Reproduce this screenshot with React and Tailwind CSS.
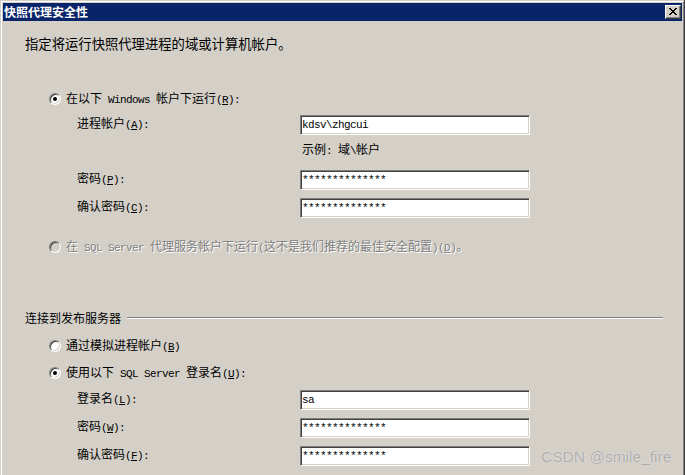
import React from "react";

const CJK = "font-['Noto_Sans_CJK_SC','Noto_Sans_CJK_JP',sans-serif]";

function M({ children }) {
  return (
    <span className="font-['Liberation_Mono',monospace] text-[11px] tracking-[-0.6px]">
      {children}
    </span>
  );
}

function Mn({ k }) {
  return (
    <M>
      (<u>{k}</u>)
    </M>
  );
}

function Radio({ checked, disabled }) {
  return (
    <div
      className={
        "w-3 h-3 shrink-0 rounded-full border border-t-[#808080] border-l-[#808080] border-r-white border-b-white shadow-[inset_1px_1px_0_#404040,inset_-1px_-1px_0_#d4d0c8] flex items-center justify-center " +
        (disabled ? "bg-[#d4d0c8]" : "bg-white")
      }
    >
      {checked && <div className="w-1 h-1 rounded-full bg-black" />}
    </div>
  );
}

function Box({ children }) {
  return (
    <div className="w-[230px] h-[20px] bg-white border border-t-[#808080] border-l-[#808080] border-r-white border-b-white shadow-[inset_1px_1px_0_#404040,inset_-1px_-1px_0_#d4d0c8] flex items-center pl-[1px] text-black">
      <M>{children}</M>
    </div>
  );
}

function Field({ label, value, className }) {
  return (
    <div className={"flex items-start " + (className || "")}>
      <div className="w-[275px] shrink-0 pl-[52px] pt-[1px] leading-[14px]">{label}</div>
      <Box>{value}</Box>
    </div>
  );
}

function CloseGlyph() {
  const rows = [
    "11000011",
    "01100110",
    "00111100",
    "00011000",
    "00111100",
    "01100110",
    "11000011",
  ];
  const rects = [];
  rows.forEach((r, y) =>
    r.split("").forEach((c, x) => {
      if (c === "1") rects.push(<rect key={x + "-" + y} x={x} y={y} width="1" height="1" />);
    })
  );
  return (
    <svg width="8" height="7" viewBox="0 0 8 7" shapeRendering="crispEdges" fill="#000">
      {rects}
    </svg>
  );
}

export default function App() {
  const pw = "**************";
  return (
    <div className={"relative w-[685px] h-[475px] overflow-hidden bg-[#d4d0c8] pt-px pl-px border-r border-[#404040] text-[12px] text-black " + CJK}>
      <div className="h-full border-t border-l border-r border-t-white border-l-white border-r-[#808080] p-px">
        {/* Title bar */}
        <div className="h-[18px] bg-[#0a246a] flex items-center justify-between pl-px pr-[1px]">
          <span className="text-white font-bold text-[12px] leading-[14px]">快照代理安全性</span>
          <div className="w-4 h-[14px] bg-[#d4d0c8] border border-t-white border-l-white border-r-[#404040] border-b-[#404040] shadow-[inset_-1px_-1px_0_#808080] flex items-center justify-center pb-px pr-px">
            <CloseGlyph />
          </div>
        </div>

        {/* Content */}
        <div className="flex flex-col pl-[22px]">
          <div className="mt-[16px] h-[14px] leading-[14px] text-[13.33px]">指定将运行快照代理进程的域或计算机帐户。</div>

          <div className="mt-[41px] h-[14px] ml-[24px] flex items-center gap-[5px] leading-[14px]">
            <Radio checked />
            <span>
              在以下<M> Windows </M>帐户下运行<Mn k="R" />
              <M>:</M>
            </span>
          </div>

          <Field
            className="mt-[9px]"
            label={
              <>
                进程帐户<Mn k="A" />
                <M>:</M>
              </>
            }
            value="kdsv\zhgcui"
          />

          <div className="mt-[7px] h-[14px] leading-[14px] pl-[277px]">
            示例<M>: </M>域<M>\</M>帐户
          </div>

          <Field
            className="mt-[14px]"
            label={
              <>
                密码<Mn k="P" />
                <M>:</M>
              </>
            }
            value={pw}
          />
          <Field
            className="mt-[8px]"
            label={
              <>
                确认密码<Mn k="C" />
                <M>:</M>
              </>
            }
            value={pw}
          />

          <div className="mt-[22px] h-[14px] ml-[24px] flex items-center gap-[5px] leading-[14px] text-[#808080] [text-shadow:1px_1px_0_#ffffff]">
            <Radio disabled />
            <span>
              在<M> SQL Server </M>代理服务帐户下运行<M>(</M>这不是我们推荐的最佳安全配置<M>)</M>
              <Mn k="D" />。
            </span>
          </div>

          <div className="mt-[57px] h-[14px] w-[638px] flex items-center leading-[14px]">
            <span>连接到发布服务器</span>
            <div className="flex-1 ml-[6px] h-[2px] border-t border-b border-t-[#808080] border-b-white" />
          </div>

          <div className="mt-[14px] h-[14px] ml-[24px] flex items-center gap-[5px] leading-[14px]">
            <Radio />
            <span>
              通过模拟进程帐户<Mn k="B" />
            </span>
          </div>

          <div className="mt-[13px] h-[14px] ml-[24px] flex items-center gap-[5px] leading-[14px]">
            <Radio checked />
            <span>
              使用以下<M> SQL Server </M>登录名<Mn k="U" />
              <M>:</M>
            </span>
          </div>

          <Field
            className="mt-[10px]"
            label={
              <>
                登录名<Mn k="L" />
                <M>:</M>
              </>
            }
            value="sa"
          />
          <Field
            className="mt-[8px]"
            label={
              <>
                密码<Mn k="W" />
                <M>:</M>
              </>
            }
            value={pw}
          />
          <Field
            className="mt-[8px]"
            label={
              <>
                确认密码<Mn k="F" />
                <M>:</M>
              </>
            }
            value={pw}
          />
        </div>
      </div>

      <div className="absolute left-[541px] top-[448px] font-['Liberation_Sans',Arial,sans-serif] text-[15.5px] leading-[18px] text-[#ababab] [text-shadow:0_0_1px_#ffffff]">
        CSDN @smile_fire
      </div>
    </div>
  );
}
